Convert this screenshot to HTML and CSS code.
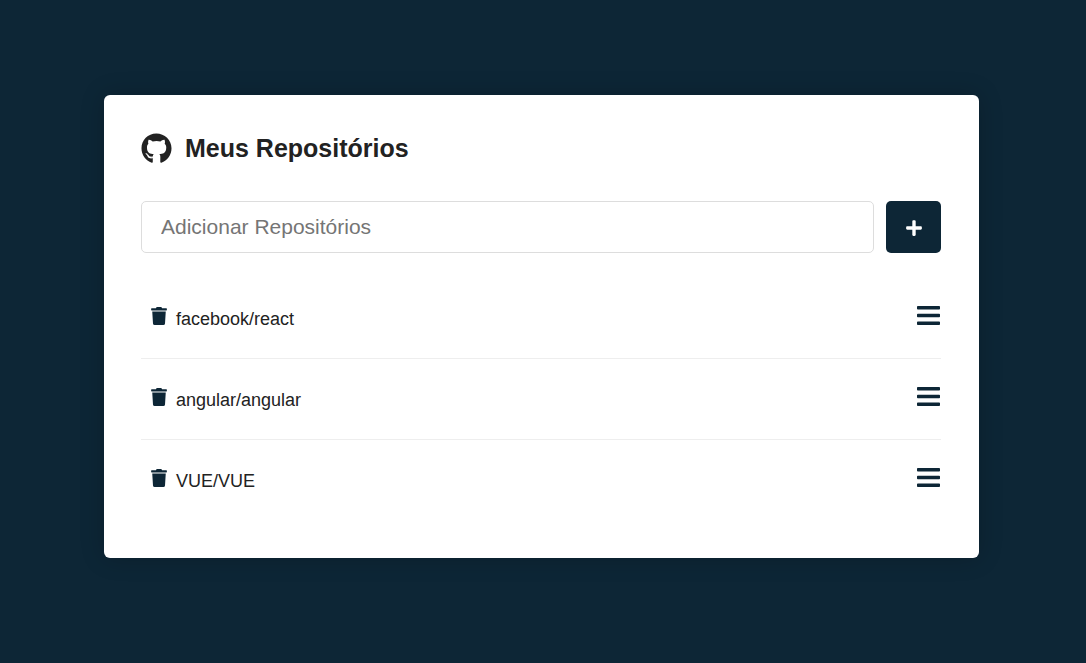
FILE: index.html
```
<!DOCTYPE html>
<html lang="pt-BR">
<head>
<meta charset="utf-8">
<meta name="viewport" content="width=device-width, initial-scale=1">
<title>Meus Repositórios</title>
<link rel="stylesheet" href="styles.css">
</head>
<body>
<svg class="sprite" aria-hidden="true">
  <symbol id="trash" viewBox="0 0 448 512"><path d="M432 32H312l-9.4-18.7A24 24 0 0 0 281.1 0H166.8a23.72 23.72 0 0 0-21.4 13.3L136 32H16A16 16 0 0 0 0 48v32a16 16 0 0 0 16 16h416a16 16 0 0 0 16-16V48a16 16 0 0 0-16-16zM53.2 467a48 48 0 0 0 47.9 45h245.8a48 48 0 0 0 47.9-45L416 128H32z"/></symbol>
  <symbol id="bars" viewBox="0 0 448 512" preserveAspectRatio="none"><path d="M16 132h416c8.8 0 16-7.2 16-16V76c0-8.8-7.2-16-16-16H16C7.2 60 0 67.2 0 76v40c0 8.8 7.2 16 16 16zm0 160h416c8.8 0 16-7.2 16-16v-40c0-8.8-7.2-16-16-16H16c-8.8 0-16 7.2-16 16v40c0 8.8 7.2 16 16 16zm0 160h416c8.8 0 16-7.2 16-16v-40c0-8.8-7.2-16-16-16H16c-8.8 0-16 7.2-16 16v40c0 8.8 7.2 16 16 16z"/></symbol>
</svg>
<main class="card">
  <h1 class="title">
    <svg class="title-icon" viewBox="0 0 496 512" aria-hidden="true"><path d="M165.9 397.4c0 2-2.3 3.6-5.2 3.6-3.3.3-5.6-1.3-5.6-3.6 0-2 2.3-3.6 5.2-3.6 3-.3 5.6 1.3 5.6 3.6zm-31.1-4.5c-.7 2 1.3 4.3 4.3 4.9 2.6 1 5.600 0 6.200-2s-1.300-4.300-4.300-5.200c-2.600-.7-5.500.3-6.200 2.300zm44.200-1.700c-2.900.7-4.900 2.600-4.600 4.900.3 2 2.900 3.300 5.900 2.600 2.900-.7 4.900-2.600 4.600-4.600-.3-1.900-3-3.200-5.900-2.900zM244.800 8C106.100 8 0 113.300 0 252c0 110.900 69.800 205.800 169.500 239.200 12.800 2.300 17.300-5.600 17.300-12.100 0-6.200-.3-40.400-.3-61.400 0 0-70 15-84.700-29.800 0 0-11.400-29.100-27.800-36.600 0 0-22.900-15.700 1.600-15.400 0 0 24.900 2 38.600 25.800 21.900 38.600 58.600 27.500 72.900 20.900 2.300-16 8.800-27.100 16-33.700-55.900-6.200-112.300-14.300-112.300-110.500 0-27.500 7.600-41.300 23.600-58.900-2.600-6.500-11.100-33.300 2.600-67.900 20.900-6.500 69 27 69 27 20-5.600 41.500-8.500 62.800-8.500s42.800 2.900 62.800 8.500c0 0 48.100-33.600 69-27 13.700 34.700 5.200 61.400 2.600 67.900 16 17.700 25.800 31.500 25.800 58.900 0 96.500-58.900 104.200-114.800 110.500 9.200 7.900 17 22.900 17 46.400 0 33.700-.3 75.400-.3 83.600 0 6.500 4.600 14.400 17.300 12.100C428.200 457.800 496 362.900 496 252 496 113.300 383.500 8 244.800 8zM97.200 352.900c-1.300 1-1 3.300.7 5.200 1.600 1.600 3.900 2.300 5.200 1 1.300-1 1-3.300-.7-5.200-1.600-1.600-3.900-2.300-5.200-1z"/></svg>
    Meus Repositórios
  </h1>
  <form class="form">
    <input class="field" type="text" placeholder="Adicionar Repositórios" aria-label="Adicionar Repositórios">
    <button class="add" type="submit" aria-label="Adicionar">
      <svg class="plus-icon" viewBox="0 0 448 512" aria-hidden="true"><path d="M416 208H272V64c0-17.700-14.300-32-32-32h-32c-17.700 0-32 14.300-32 32v144H32c-17.700 0-32 14.300-32 32v32c0 17.700 14.300 32 32 32h144v144c0 17.700 14.300 32 32 32h32c17.700 0 32-14.300 32-32V304h144c17.700 0 32-14.300 32-32v-32c0-17.700-14.300-32-32-32z"/></svg>
    </button>
  </form>
  <ul class="list">
    <li class="row">
      <span class="repo"><button class="delete" type="button" aria-label="Excluir facebook/react"><svg class="trash-icon"><use href="#trash"/></svg></button>facebook/react</span>
      <a class="details" href="#facebook" aria-label="Detalhes de facebook/react"><svg class="bars-icon"><use href="#bars"/></svg></a>
    </li>
    <li class="row">
      <span class="repo"><button class="delete" type="button" aria-label="Excluir angular/angular"><svg class="trash-icon"><use href="#trash"/></svg></button>angular/angular</span>
      <a class="details" href="#angular" aria-label="Detalhes de angular/angular"><svg class="bars-icon"><use href="#bars"/></svg></a>
    </li>
    <li class="row">
      <span class="repo"><button class="delete" type="button" aria-label="Excluir VUE/VUE"><svg class="trash-icon"><use href="#trash"/></svg></button>VUE/VUE</span>
      <a class="details" href="#vue" aria-label="Detalhes de VUE/VUE"><svg class="bars-icon"><use href="#bars"/></svg></a>
    </li>
  </ul>
</main>
</body>
</html>
```
FILE: styles.css
```
* {
  box-sizing: border-box;
  margin: 0;
  padding: 0;
}

body {
  min-height: 100vh;
  padding: 95px 3px 40px 0;
  background: #0d2636;
  color: #222;
  font-family: "Liberation Sans", Arial, Helvetica, sans-serif;
}

svg {
  display: block;
  fill: currentColor;
}

.sprite {
  display: none;
}

.card {
  max-width: 875px;
  margin: 0 auto;
  padding: 37px 38px 38px 37px;
  border-radius: 6px;
  background: #fff;
  box-shadow: 0 0 25px rgba(0, 0, 0, 0.2);
}

.title {
  display: flex;
  align-items: center;
  gap: 13px;
  font-size: 25px;
  line-height: 32px;
}

.title-icon {
  width: 31px;
  height: 32px;
  padding-top: 1px;
}

.form {
  display: flex;
  gap: 12px;
  margin-top: 37px;
}

.field {
  flex: 1;
  min-width: 0;
  height: 52px;
  padding: 0 19px;
  border: 1px solid #ddd;
  border-radius: 5px;
  background: #fff;
  color: #222;
  font-family: inherit;
  font-size: 21px;
}

.field::placeholder {
  color: #757575;
}

.add {
  display: flex;
  align-items: center;
  justify-content: center;
  width: 55px;
  height: 52px;
  padding-top: 2px;
  border: 0;
  border-radius: 5px;
  background: #0d2636;
  color: #fff;
}

.plus-icon {
  width: 16px;
  height: 18px;
}

.list {
  margin-top: 25px;
  list-style: none;
}

.row {
  display: flex;
  align-items: center;
  justify-content: space-between;
  height: 80px;
  font-size: 18px;
}

.row + .row {
  height: 81px;
  border-top: 1px solid #eee;
}

.repo {
  display: flex;
  align-items: center;
  padding-top: 2px;
}

.delete {
  padding: 0 9px 7px 10px;
  border: 0;
  background: transparent;
  color: #0d2636;
}

.trash-icon {
  width: 16px;
  height: 18px;
}

.details {
  padding: 0 1px 6px 0;
  color: #0d2636;
}

.bars-icon {
  width: 23px;
  height: 25px;
}
```
